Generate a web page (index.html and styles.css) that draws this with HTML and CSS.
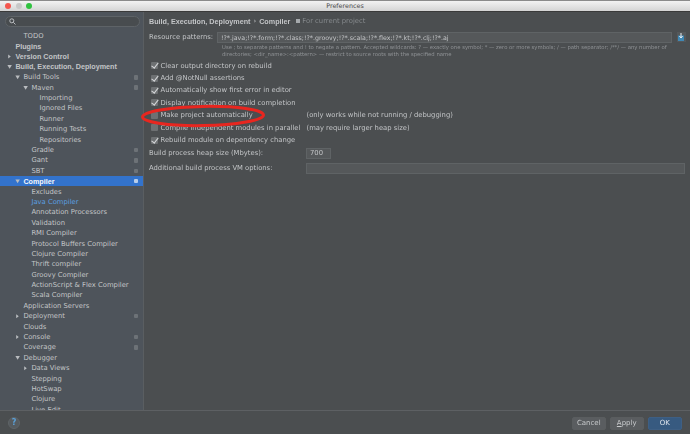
FILE: index.html
```html
<!DOCTYPE html>
<html lang="en">
<head>
  <meta charset="UTF-8">
  <meta name="viewport" content="width=device-width, initial-scale=1.0">
  <title>Preferences</title>
  <link rel="stylesheet" href="styles.css">
</head>
<body>
  <div class="window">
    <!-- Title bar -->
    <header class="titlebar">
      <div class="lights">
        <span class="light red"></span>
        <span class="light grey"></span>
        <span class="light green"></span>
      </div>
      <span class="title">Preferences</span>
    </header>

    <div class="main">
      <!-- Settings tree -->
      <aside class="sidebar">
        <div class="search">
          <svg class="search-icon" viewBox="0 0 8 8"><circle cx="3.2" cy="3.2" r="2.3"/><path d="M5 5l2.4 2.4"/></svg>
        </div>
        <ul class="tree">
          <li class="row lv1"><i class="arrow"></i>TODO</li>
          <li class="row lv0 bold"><i class="arrow"></i>Plugins</li>
          <li class="row lv0 bold"><i class="arrow right"></i>Version Control</li>
          <li class="row lv0 bold"><i class="arrow down"></i>Build, Execution, Deployment</li>
          <li class="row lv1"><i class="arrow down"></i>Build Tools<b class="badge"></b></li>
          <li class="row lv2"><i class="arrow down"></i>Maven<b class="badge"></b></li>
          <li class="row lv3"><i class="arrow"></i>Importing</li>
          <li class="row lv3"><i class="arrow"></i>Ignored Files</li>
          <li class="row lv3"><i class="arrow"></i>Runner</li>
          <li class="row lv3"><i class="arrow"></i>Running Tests</li>
          <li class="row lv3"><i class="arrow"></i>Repositories</li>
          <li class="row lv2"><i class="arrow"></i>Gradle<b class="badge"></b></li>
          <li class="row lv2"><i class="arrow"></i>Gant<b class="badge"></b></li>
          <li class="row lv2"><i class="arrow"></i>SBT<b class="badge"></b></li>
          <li class="row lv1 selected"><i class="arrow down"></i>Compiler<b class="badge"></b></li>
          <li class="row lv2"><i class="arrow"></i>Excludes</li>
          <li class="row lv2 link"><i class="arrow"></i>Java Compiler</li>
          <li class="row lv2"><i class="arrow"></i>Annotation Processors</li>
          <li class="row lv2"><i class="arrow"></i>Validation</li>
          <li class="row lv2"><i class="arrow"></i>RMI Compiler</li>
          <li class="row lv2"><i class="arrow"></i>Protocol Buffers Compiler</li>
          <li class="row lv2"><i class="arrow"></i>Clojure Compiler</li>
          <li class="row lv2"><i class="arrow"></i>Thrift compiler</li>
          <li class="row lv2"><i class="arrow"></i>Groovy Compiler</li>
          <li class="row lv2"><i class="arrow"></i>ActionScript &amp; Flex Compiler</li>
          <li class="row lv2"><i class="arrow"></i>Scala Compiler</li>
          <li class="row lv1"><i class="arrow"></i>Application Servers</li>
          <li class="row lv1"><i class="arrow right"></i>Deployment<b class="badge"></b></li>
          <li class="row lv1"><i class="arrow"></i>Clouds</li>
          <li class="row lv1"><i class="arrow right"></i>Console<b class="badge"></b></li>
          <li class="row lv1"><i class="arrow"></i>Coverage<b class="badge"></b></li>
          <li class="row lv1"><i class="arrow down"></i>Debugger</li>
          <li class="row lv2"><i class="arrow right"></i>Data Views</li>
          <li class="row lv2"><i class="arrow"></i>Stepping</li>
          <li class="row lv2"><i class="arrow"></i>HotSwap</li>
          <li class="row lv2"><i class="arrow"></i>Clojure</li>
          <li class="row lv2"><i class="arrow"></i>Live Edit</li>
        </ul>
      </aside>

      <!-- Compiler settings -->
      <section class="content">
        <div class="crumbs">
          <strong>Build, Execution, Deployment</strong>
          <span class="sep">›</span>
          <strong>Compiler</strong>
          <span class="scope"><b class="scope-icon"></b>For current project</span>
        </div>

        <div class="patterns">
          <label>Resource patterns:</label>
          <div class="input wide">!?*.java;!?*.form;!?*.class;!?*.groovy;!?*.scala;!?*.flex;!?*.kt;!?*.clj;!?*.aj</div>
          <span class="folder"><svg viewBox="0 0 8 10"><rect x="1" y="3.5" width="6" height="5.5" fill="#3f88b5"/><path d="M4 1v5M2.4 4L4 6l1.6-2" fill="none" stroke="#e6eef4" stroke-width="1"/></svg></span>
        </div>
        <p class="hint">Use ; to separate patterns and ! to negate a pattern. Accepted wildcards: ? — exactly one symbol; * — zero or more symbols; / — path separator; /**/ — any number of directories; &lt;dir_name&gt;:&lt;pattern&gt; — restrict to source roots with the specified name</p>

        <ul class="checks">
          <li class="check on"><i class="box"></i><span class="check-label">Clear output directory on rebuild</span></li>
          <li class="check on"><i class="box"></i><span class="check-label">Add @NotNull assertions</span></li>
          <li class="check on"><i class="box"></i><span class="check-label">Automatically show first error in editor</span></li>
          <li class="check on"><i class="box"></i><span class="check-label">Display notification on build completion</span></li>
          <li class="check"><i class="box"></i><span class="check-label">Make project automatically</span><span class="note">(only works while not running / debugging)</span></li>
          <li class="check"><i class="box"></i><span class="check-label">Compile independent modules in parallel</span><span class="note">(may require larger heap size)</span></li>
          <li class="check on"><i class="box"></i><span class="check-label">Rebuild module on dependency change</span></li>
        </ul>

        <div class="field">
          <label>Build process heap size (Mbytes):</label>
          <div class="input heap">700</div>
        </div>
        <div class="field vm">
          <label>Additional build process VM options:</label>
          <div class="input vm-input"></div>
        </div>

        <!-- Red annotation around the option -->
        <svg class="annotation" viewBox="0 0 126 24"><ellipse cx="63" cy="12" rx="60.5" ry="9.6" transform="rotate(-1 63 12)"/></svg>
      </section>
    </div>

    <footer class="footer">
      <span class="help">?</span>
      <div class="buttons">
        <button class="btn">Cancel</button>
        <button class="btn"><u>A</u>pply</button>
        <button class="btn primary">OK</button>
      </div>
    </footer>
  </div>
</body>
</html>
```

FILE: styles.css
```css
/* General Styles */
* {
  margin: 0;
  padding: 0;
  box-sizing: border-box;
}

html, body {
  height: 100%;
  overflow: hidden;
}

body {
  font-family: "DejaVu Sans", sans-serif;
  font-size: 6.8px;
  color: #c3c5c7;
  background-color: #4b4e50;
}

ul {
  list-style: none;
}

strong, .bold {
  font-family: "Liberation Sans", sans-serif;
  font-size: 7.2px;
  font-weight: bold;
}

.window {
  display: flex;
  flex-direction: column;
  height: 434px;
  filter: blur(0.3px);
}

/* Title bar */
.titlebar {
  position: relative;
  display: flex;
  flex: none;
  align-items: center;
  justify-content: center;
  height: 12px;
  border-top: 1px solid #8a8a8a;
  border-bottom: 1px solid #3a3a3a;
  background: linear-gradient(#f2f2f2, #d4d4d4);
}

.lights {
  position: absolute;
  left: 5px;
  top: 2px;
  display: flex;
  gap: 4.5px;
}

.light {
  width: 6px;
  height: 6px;
  border-radius: 50%;
}

.light.red { background-color: #f4564e; }
.light.grey { background-color: #c8c8c8; }
.light.green { background-color: #2fc23f; }

.title {
  font-size: 6.4px;
  color: #4a4a4a;
}

.main {
  display: flex;
  flex: 1;
  min-height: 0;
}

/* Sidebar */
.sidebar {
  flex: none;
  width: 144px;
  padding: 3.5px 0 0 0.4px;
  overflow: hidden;
  background-color: #4e545b;
  border-right: 1px solid #5a5e61;
}

.search {
  display: flex;
  align-items: center;
  height: 11px;
  margin: 0 3px 4px 4.6px;
  padding-left: 3px;
  border: 1px solid #5e6367;
  border-radius: 6px;
  background-color: #484c4f;
}

.search-icon {
  width: 7px;
  height: 7px;
  fill: none;
  stroke: #c9cccf;
  stroke-width: 1;
}

.row {
  display: flex;
  align-items: center;
  height: 10.4px;
  white-space: nowrap;
}

.lv0 { padding-left: 7px; }
.lv1 { padding-left: 15px; }
.lv2 { padding-left: 23px; }
.lv3 { padding-left: 31px; }

.row.link { color: #5a9fe0; }

.row.selected {
  margin-left: -0.4px;
  padding-left: 15.4px;
  background-color: #3373cc;
  color: #f4f7fb;
  font-family: "Liberation Sans", sans-serif;
  font-size: 7.2px;
  font-weight: bold;
}

.arrow {
  flex: none;
  width: 8px;
  height: 5px;
}

.arrow.right {
  background: #b9bcbf;
  clip-path: polygon(10% 10%, 42% 50%, 10% 90%);
}

.arrow.down {
  background: #b9bcbf;
  clip-path: polygon(0 15%, 56% 15%, 28% 90%);
}

.badge {
  flex: none;
  width: 4.5px;
  height: 4.5px;
  margin-left: auto;
  margin-right: 5px;
  border-radius: 1px;
  background-color: #6d7277;
}

.selected .badge {
  background-color: #b8cdea;
}

/* Content */
.content {
  position: relative;
  flex: 1;
  min-width: 0;
  padding: 3.5px 5px 0 5px;
}

.crumbs {
  display: flex;
  align-items: center;
  gap: 3px;
  height: 11px;
  white-space: nowrap;
}

.scope {
  display: flex;
  align-items: center;
  gap: 2px;
  margin-left: 3px;
  color: #85898c;
}

.scope-icon {
  width: 4px;
  height: 4px;
  background-color: #a5a9ac;
}

.patterns {
  display: flex;
  align-items: center;
  margin-top: 5px;
}

.patterns label {
  flex: none;
  width: 68px;
  white-space: nowrap;
}

.input {
  display: flex;
  align-items: center;
  flex: none;
  height: 11.5px;
  padding-left: 3px;
  border: 1px solid #5f6365;
  background-color: #55585a;
}

.wide {
  width: 455px;
  font-size: 6.3px;
  white-space: nowrap;
  overflow: hidden;
}

.folder {
  display: flex;
  flex: none;
  width: 9px;
  height: 10px;
  margin-left: 4.5px;
  background-color: #55585a;
}

.hint {
  width: 470px;
  margin: 0.5px 0 0 73px;
  font-size: 5.3px;
  line-height: 7px;
  color: #909396;
}

.checks {
  margin-top: 2px;
}

.check {
  display: flex;
  align-items: center;
  height: 12.4px;
  white-space: nowrap;
}

.box {
  position: relative;
  flex: none;
  width: 7px;
  height: 7px;
  margin: 0 3px 0 1.5px;
  border-radius: 1px;
  background-color: #6d7072;
}

.check.on .box::after {
  content: "";
  position: absolute;
  left: 2.2px;
  top: -1px;
  width: 2.5px;
  height: 6px;
  border-right: 1.2px solid #d4d6d8;
  border-bottom: 1.2px solid #d4d6d8;
  transform: rotate(38deg);
}

.check-label {
  flex: none;
  width: 146px;
}

.field {
  display: flex;
  align-items: center;
  margin-top: 1.5px;
  white-space: nowrap;
}

.field.vm {
  margin-top: 3.5px;
}

.field label {
  flex: none;
  width: 157px;
}

.heap {
  width: 25px;
}

.vm-input {
  flex: 1;
}

.annotation {
  position: absolute;
  left: -4px;
  top: 91.5px;
  width: 126px;
  height: 24px;
  fill: none;
  stroke: #e8261f;
  stroke-width: 3;
}

/* Footer */
.footer {
  display: flex;
  align-items: center;
  justify-content: space-between;
  flex: none;
  height: 24px;
  padding: 0 8px;
  border-top: 1px solid #5d6063;
}

.help {
  display: flex;
  align-items: center;
  justify-content: center;
  width: 12px;
  height: 12px;
  border: 1px solid #5f6467;
  border-radius: 50%;
  background-color: #565b5f;
  color: #5aa0d8;
  font-weight: bold;
  font-size: 8px;
}

.buttons {
  display: flex;
  gap: 3.5px;
  margin-top: 1px;
}

.btn {
  width: 34.5px;
  height: 13px;
  border: 1px solid #5a5d5f;
  border-radius: 2px;
  background-color: #5a5d60;
  color: #c8cacc;
  font-family: inherit;
  font-size: 7px;
}

.btn.primary {
  background-color: #375a80;
  border-color: #3e5f84;
  color: #dfe5ec;
}
```
